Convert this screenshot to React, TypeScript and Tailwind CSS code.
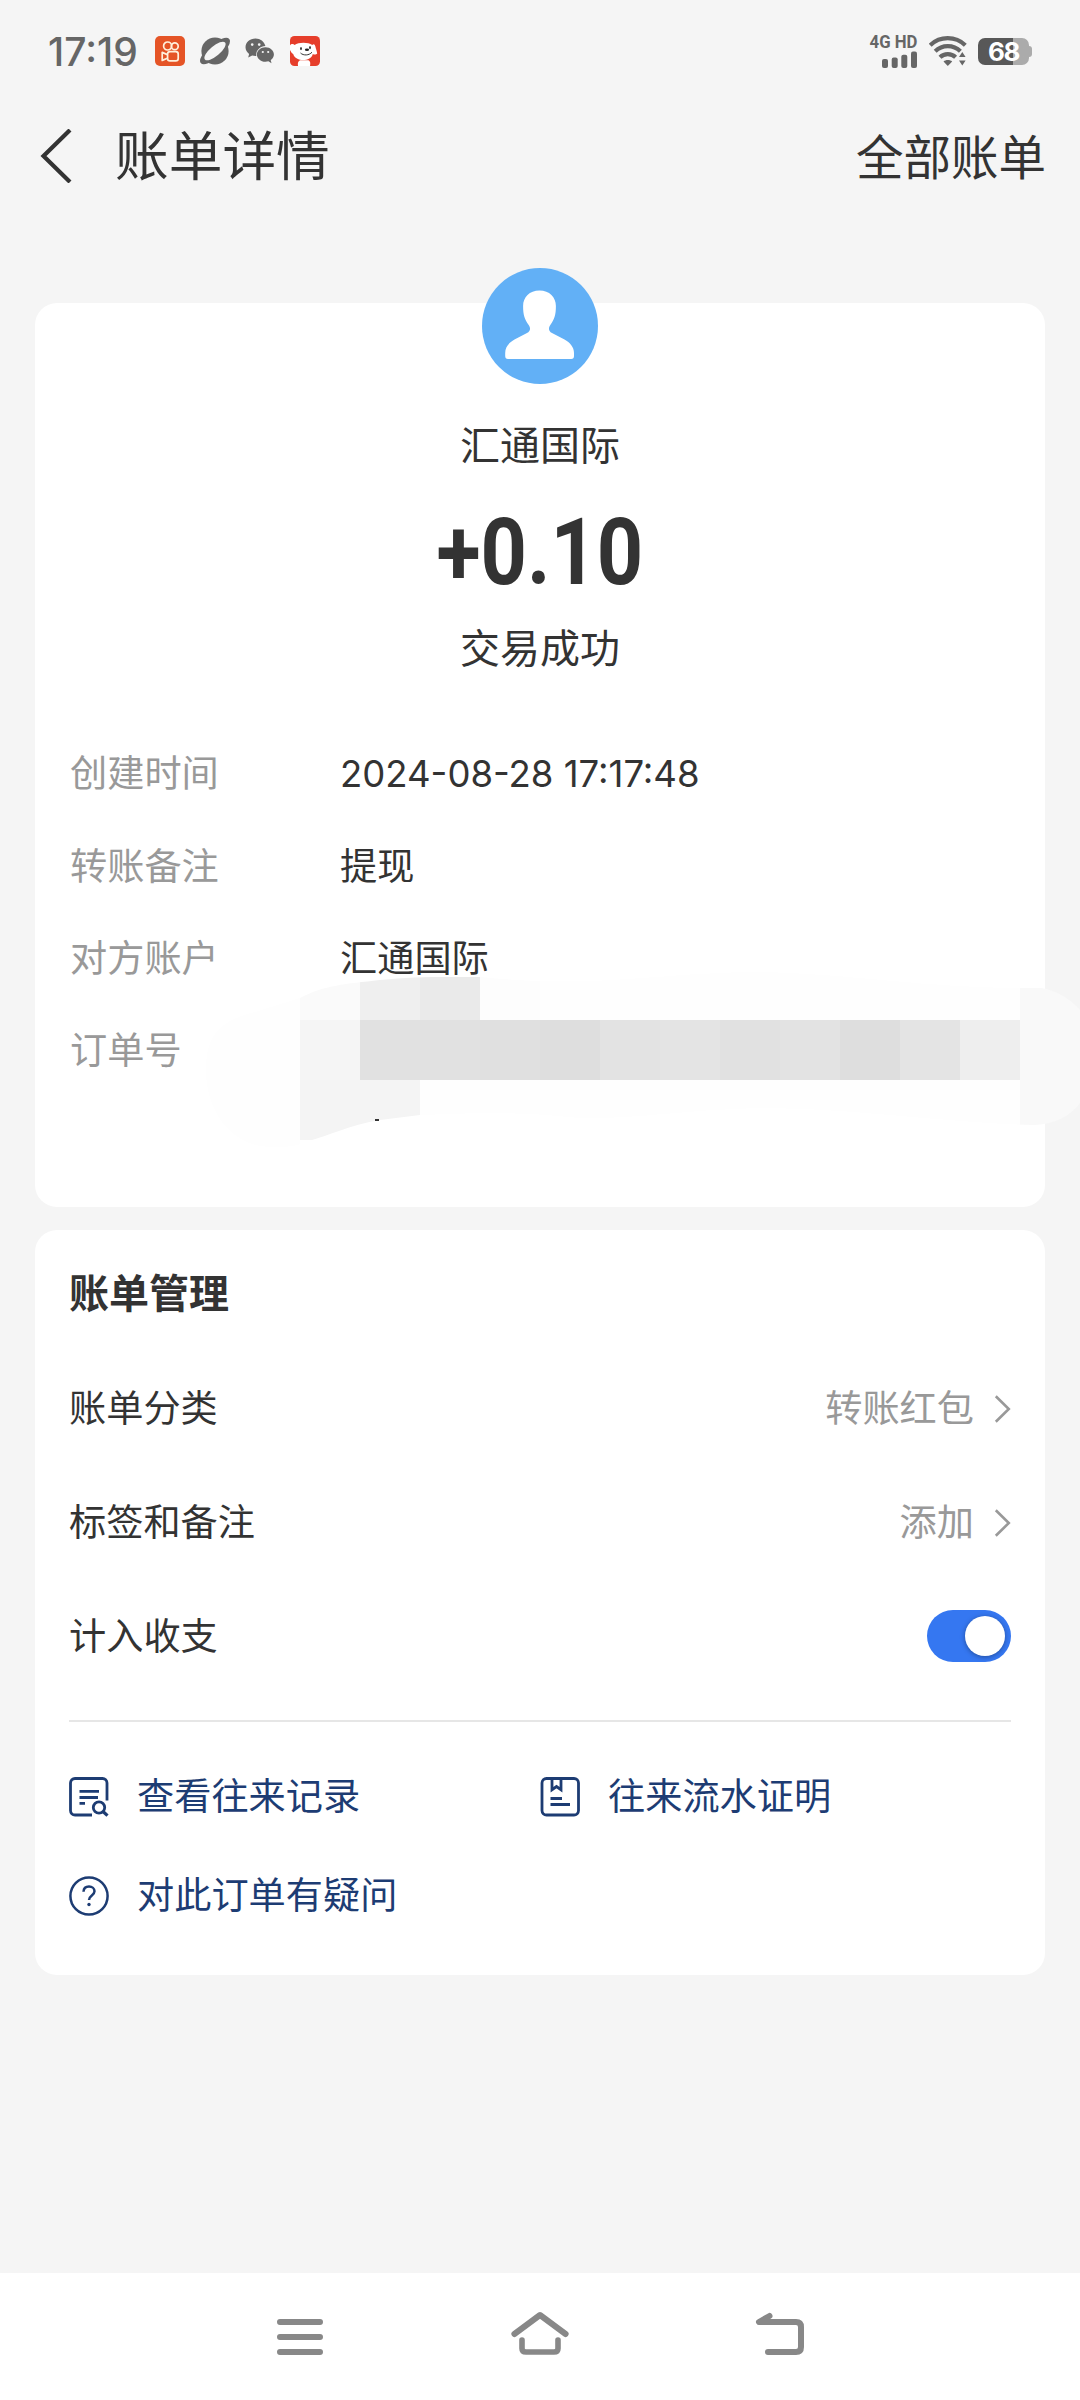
import type { ReactNode } from "react";

const details = [
  { label: "转账备注", value: "提现" },
  { label: "对方账户", value: "汇通国际" },
  { label: "订单号", value: "" },
];

const KuaishouIcon = () => (
  <svg width="30" height="30" viewBox="0 0 30 30" fill="none">
    <rect width="30" height="30" rx="5" fill="#e55426" />
    <g stroke="#fff0dc" strokeWidth="1.7">
      <circle cx="12.6" cy="10" r="4" />
      <circle cx="19.8" cy="10.3" r="3.4" />
      <rect x="12.6" y="15.6" width="10.6" height="9.2" rx="2.4" />
      <path d="M12.4 18.6 7.2 16.4v8l5.2-2.2" strokeLinejoin="round" />
    </g>
  </svg>
);

const PlanetIcon = () => (
  <svg width="30" height="30" viewBox="0 0 30 30">
    <circle cx="15" cy="15" r="13.6" fill="#666" />
    <ellipse cx="15" cy="15" rx="18.6" ry="7" transform="rotate(-40 15 15)" fill="#666" />
    <ellipse cx="15" cy="15" rx="13.2" ry="5" transform="rotate(-40 15 15)" fill="#f5f5f5" />
  </svg>
);

const WechatIcon = () => (
  <svg width="30" height="26" viewBox="0 0 30 26" fill="#666">
    <path d="M10.500.5C4.800.5.5 4.300.5 9.200c0 2.800 1.500 5.100 3.600 6.700l-.9 3.700 4-2.100c1.100.3 2.200.5 3.300.5h.8c-.7-5.500 3.700-9.600 9.100-9.900C19.300 3.600 15.300.5 10.500.5Z" />
    <path d="M20.500 9.300c-4.900 0-8.600 3.300-8.600 7.200s3.700 7.300 8.600 7.300c1 0 2-.2 2.900-.5l3.100 1.900-.8-3.100c2-1.400 3.200-3.400 3.200-5.600 0-3.900-3.600-7.200-8.400-7.200Z" />
    <g fill="#f5f5f5">
      <circle cx="7.200" cy="6.600" r="1.300" />
      <circle cx="14.200" cy="6.600" r="1.300" />
      <circle cx="17.800" cy="14" r="1.100" />
      <circle cx="23.200" cy="14" r="1.100" />
    </g>
  </svg>
);

const JdIcon = () => (
  <svg width="30" height="30" viewBox="0 0 30 30">
    <rect width="30" height="30" rx="4.500" fill="#e63e2b" />
    <path d="M0 9.500c1-1.800 3.500-1.700 4.600-.6C8.500 6.300 18 6 22.300 9c1.300-1.500 2.500-.7 3 1.200.6 3 1.600 4.700 1.900 7.300-1.200 1.500-3.200 1.200-4.400.5C21 26 5.500 26 3.200 18 1.500 17 .8 15.500 0 14Z" fill="#fff" />
    <path d="M8 30c-.5-3 0-4.500 2-5.800h8.500c2 1.300 2 2.800 1.500 5.800Z" fill="#fff" />
    <ellipse cx="11" cy="12.600" rx=".9" ry="1.600" fill="#333" />
    <ellipse cx="20" cy="11.600" rx=".9" ry="1.600" fill="#333" />
    <ellipse cx="17" cy="13.800" rx="2.100" ry="1.300" fill="#222" />
    <path d="M10.500 17c3 2.800 8.500 2.600 11.500-.8" stroke="#333" strokeWidth="1" fill="none" />
  </svg>
);

const SignalBars = () => (
  <svg width="35" height="17" viewBox="0 0 35 17" fill="#666">
    <rect x="0" y="8" width="6" height="9" rx="2" />
    <rect x="9.700" y="6.500" width="6" height="10.500" rx="2" />
    <rect x="19.300" y="3.800" width="6" height="13.200" rx="2" />
    <rect x="29" y=".5" width="6" height="16.500" rx="2" />
  </svg>
);

const WifiIcon = () => (
  <svg width="38" height="30" viewBox="0 0 38 30" fill="none">
    <g stroke="#666" strokeWidth="4.200">
      <path d="M1.200 9.200C11-.2 26.500-.2 36.300 9.200" />
      <path d="M6.200 15.300c7-6.800 18.200-6.800 25.200 0" />
      <path d="M11 21.200c4.300-4.200 11.300-4.200 15.600 0" />
    </g>
    <path d="M14.500 25.600c2.200-2 6.500-2 8.700 0L18.800 30Z" fill="#666" />
    <path d="M29 21.500 33.300 15l4.300 6.500v2.500L33.300 30 29 24Z" fill="#f5f5f5" />
    <path d="m30 21 3.300-5 3.300 5ZM30 24.500l3.300 5 3.300-5Z" fill="#666" />
  </svg>
);

const Battery = () => (
  <div className="flex items-center">
    <div className="flex h-[27px] w-[51px] items-center justify-center rounded-[7px] bg-linear-to-r from-[#585858] from-68% to-[#ababab] to-68%">
      <span className="mt-[2px] font-['Inter',sans-serif] text-[26px] leading-none font-bold tracking-[-1.500px] text-white">68</span>
    </div>
    <div className="h-[11px] w-[3px] rounded-r-[3px] bg-[#ababab]" />
  </div>
);

const BackChevron = () => (
  <svg width="32" height="54" viewBox="0 0 32 54" fill="none">
    <path d="M30 1 3.500 27 30 53" stroke="#333" strokeWidth="4.200" />
  </svg>
);

const ChevronRight = () => (
  <svg className="mt-[5px]" width="17" height="28" viewBox="0 0 17 28" fill="none">
    <path d="m1.800 1.200 13 12.800-13 12.800" stroke="#999" strokeWidth="2.600" />
  </svg>
);

const Avatar = () => (
  <svg width="116" height="116" viewBox="0 0 116 116">
    <circle cx="58" cy="58" r="58" fill="#62b0f6" />
    <path
      d="M57.500 22.500c-10 0-16.400 6.800-16.400 15.500 0 9 1.600 13.500 5.400 18.700 2.200 3 2.300 6.200-1.500 8.300l-12.500 6.500C27 74.500 23.200 79 23.200 85v3c0 2 .8 3 2.800 3h63.200c2 0 2.800-1 2.800-3v-3c0-6-4-10.500-9.500-13.500L70 65c-3.800-2.100-3.700-5.300-1.500-8.300 3.800-5.200 5.400-9.700 5.400-18.700 0-8.700-6.400-15.500-16.400-15.500Z"
      fill="#fff"
    />
  </svg>
);

const RecordsIcon = () => (
  <svg width="40" height="40" viewBox="0 0 40 40" fill="none" stroke="#1d3c73" strokeWidth="2.800">
    <path d="M38 23.500V6a4.500 4.500 0 0 0-4.500-4.500H6A4.500 4.500 0 0 0 1.500 6v27.500A4.500 4.500 0 0 0 6 38h17" />
    <path d="M10.500 14.300H30M10.500 20.500h18.500M10.500 26.300H16" />
    <circle cx="30" cy="30.500" r="5.700" />
    <path d="m34 34.500 4.500 4.200" strokeWidth="3.200" />
  </svg>
);

const CertificateIcon = () => (
  <svg width="40" height="40" viewBox="0 0 40 40" fill="none" stroke="#1d3c73" strokeWidth="2.800">
    <rect x="2" y="1.500" width="36.500" height="36.500" rx="4.500" />
    <path d="M12 2v10.700l4.500-3.200 4.500 3.200V2" />
    <path d="M10.500 21.500h11.500M10.500 27.500H30" />
  </svg>
);

const QuestionIcon = () => (
  <svg width="40" height="40" viewBox="0 0 40 40" fill="none" stroke="#1d3c73" strokeWidth="2.500">
    <circle cx="20" cy="20" r="18.600" />
    <path d="M14.500 15.800c.2-3.400 2.400-5.200 5.500-5.200s5.500 2 5.500 4.700c0 4.200-5.500 4.200-5.500 8.700" />
    <circle cx="20" cy="28.500" r="1.700" fill="#1d3c73" stroke="none" />
  </svg>
);

// 60px blocks, left to right; the first block starts at x = 300
const mosaicRows = [
  ["#fafafa", "#efefef", "#eaeaea", "#fdfdfd", "#fefefe", "#fefefe", "#fefefe", "#fefefe", "#fefefe", "#fefefe", "#fefefe", "#fefefe", "#f9f9f9"],
  ["#f5f5f5", "#e1e1e1", "#e1e1e1", "#e0e0e0", "#dedede", "#e3e3e3", "#e4e4e4", "#e1e1e1", "#e3e3e3", "#dedede", "#e4e4e4", "#eeeeee", "#f9f9f9"],
  ["#f4f4f4", "#f4f4f4", "#fefefe", "#fefefe", "#fefefe", "#fefefe", "#fefefe", "#fefefe", "#fefefe", "#fefefe", "#fefefe", "#fefefe", "#f9f9f9"],
];

const Mosaic = () => (
  <svg className="absolute top-[960px] left-0" width="1080" height="200" viewBox="0 960 1080 200">
    <clipPath id="smear">
      <path d="M300 998C325 985 345 984 380 980S450 977 480 977C520 981 550 982 590 981S700 972 760 972C850 974 930 988 1020 988H1041C1056 990 1072 1000 1080 1010V1103C1070 1116 1055 1124 1035 1125C960 1124 850 1108 760 1108C680 1110 640 1119 580 1118C530 1113 500 1113 480 1113L420 1115L380 1120C350 1125 330 1135 309 1141C296 1147 285 1147 272 1147C230 1147 206 1110 206 1070C206 1030 225 1020 255 1012Z" />
    </clipPath>
    <g clipPath="url(#smear)" shapeRendering="crispEdges">
      <rect x="200" y="960" width="100" height="200" fill="#fefefe" />
      {mosaicRows.map((row, y) =>
        row.map((fill, x) => (
          <rect key={`${x}-${y}`} x={300 + x * 60} y={960 + y * 60} width="60" height="60" fill={fill} />
        )),
      )}
    </g>
    <rect x="375" y="1119" width="4" height="2" fill="#333" />
  </svg>
);

const StatusBar = () => (
  <div className="flex h-[102px] items-center justify-between pr-12 pl-[48px]">
    <div className="flex items-center">
      <span className="w-[107px] font-['Inter',sans-serif] text-[39px] leading-none font-medium text-[#666]">17:19</span>
      <div className="flex items-center gap-[15px]">
        <KuaishouIcon />
        <PlanetIcon />
        <WechatIcon />
        <JdIcon />
      </div>
    </div>
    <div className="flex items-center">
      <div className="mr-[12px] flex flex-col items-end gap-[2px]">
        <span className="origin-right scale-x-[0.93] font-['Roboto',sans-serif] text-[18px] leading-[14px] font-bold text-[#666]">4G HD</span>
        <SignalBars />
      </div>
      <WifiIcon />
      <div className="ml-[11px]">
        <Battery />
      </div>
    </div>
  </div>
);

const ManageRow = ({ label, children }: { label: string; children: ReactNode }) => (
  <div className="flex h-[114px] items-center justify-between">
    <span>{label}</span>
    <div className="flex items-center gap-[20px] text-[#999]">{children}</div>
  </div>
);

const LinkItem = ({ icon, text }: { icon: ReactNode; text: string }) => (
  <div className="flex h-[54px] items-center gap-[28px]">
    {icon}
    <span className="mb-[6px]">{text}</span>
  </div>
);

export default function App() {
  return (
    <div className="relative flex h-[2400px] w-[1080px] flex-col overflow-hidden bg-[#f5f5f5] font-['Noto_Sans_CJK_SC',sans-serif] text-[37.200px] leading-[54px] text-[#333]">
      <StatusBar />

      <header className="flex h-[108px] items-center justify-between pr-[34px] pl-[40px]">
        <div className="flex items-center gap-[43px]">
          <BackChevron />
          <h1 className="mb-[6px] text-[53.700px] leading-[78px]">账单详情</h1>
        </div>
        <span className="mb-[3px] text-[47.500px] leading-[70px]">全部账单</span>
      </header>

      <section className="mx-[35px] mt-[93px] flex h-[904px] flex-col rounded-[22px] bg-white">
        <div className="-mt-[35px] flex flex-col items-center">
          <Avatar />
          <div className="mt-[29px] text-[40px] leading-[60px]">汇通国际</div>
          <div className="mt-[32px] h-[96px] scale-x-[0.87] font-['Roboto',sans-serif] text-[93px] leading-[96px] font-bold">+0.10</div>
          <div className="mt-[15px] text-[40px] leading-[60px]">交易成功</div>
        </div>
        <dl className="mt-[49px] px-[35px]">
          <div className="flex h-[92.400px] items-center">
            <dt className="w-[270px] text-[#999]">创建时间</dt>
            <dd className="mt-[5px] origin-left scale-x-[0.987] font-['Inter',sans-serif] text-[37px]">2024-08-28 17:17:48</dd>
          </div>
          {details.map((item) => (
            <div key={item.label} className="flex h-[92.400px] items-center">
              <dt className="w-[270px] text-[#999]">{item.label}</dt>
              <dd>{item.value}</dd>
            </div>
          ))}
        </dl>
      </section>

      <section className="mx-[35px] mt-[23px] h-[745px] rounded-[22px] bg-white px-[34px] pt-[31px]">
        <h2 className="text-[40px] leading-[60px] font-bold">账单管理</h2>
        <div className="mt-[28px]">
          <ManageRow label="账单分类">
            <span>转账红包</span>
            <ChevronRight />
          </ManageRow>
          <ManageRow label="标签和备注">
            <span>添加</span>
            <ChevronRight />
          </ManageRow>
          <ManageRow label="计入收支">
            <div className="mt-[3px] flex h-[52px] w-[84px] items-center justify-end rounded-full bg-[#3577f1] pr-[6px]">
              <div className="size-[40px] rounded-full bg-white shadow-[0_1px_5px_rgba(0,0,0,0.35)]" />
            </div>
          </ManageRow>
        </div>
        <div className="mt-[29px] h-[2px] bg-[#e6e6e6]" />
        <div className="mt-[48px] grid grid-cols-2 gap-y-[45px] text-[#1d3c73]">
          <LinkItem icon={<RecordsIcon />} text="查看往来记录" />
          <LinkItem icon={<CertificateIcon />} text="往来流水证明" />
          <LinkItem icon={<QuestionIcon />} text="对此订单有疑问" />
        </div>
      </section>

      <Mosaic />

      <nav className="mt-auto flex h-[127px] items-start justify-center gap-[180px] bg-white pt-[36px]">
        <svg width="60" height="50" viewBox="0 0 60 50" fill="none" stroke="#888" strokeWidth="6" strokeLinecap="round">
          <path d="M10 13h40M10 28h40M10 43h40" />
        </svg>
        <svg width="60" height="50" viewBox="0 0 60 50" fill="none" stroke="#888" strokeLinecap="round" strokeLinejoin="round">
          <path d="M4.400 25 30 6l25.600 19" strokeWidth="6" />
          <path d="M12 31v8.500q0 3.500 4 3.500h28q4 0 4-3.500V31" strokeWidth="5.600" />
        </svg>
        <svg width="60" height="50" viewBox="0 0 60 50" fill="none" stroke="#888" strokeWidth="6" strokeLinecap="round" strokeLinejoin="round">
          <path d="M19.500 7 9 13h37q5 0 5 5v20q0 5-5 5H18" />
        </svg>
      </nav>
    </div>
  );
}
